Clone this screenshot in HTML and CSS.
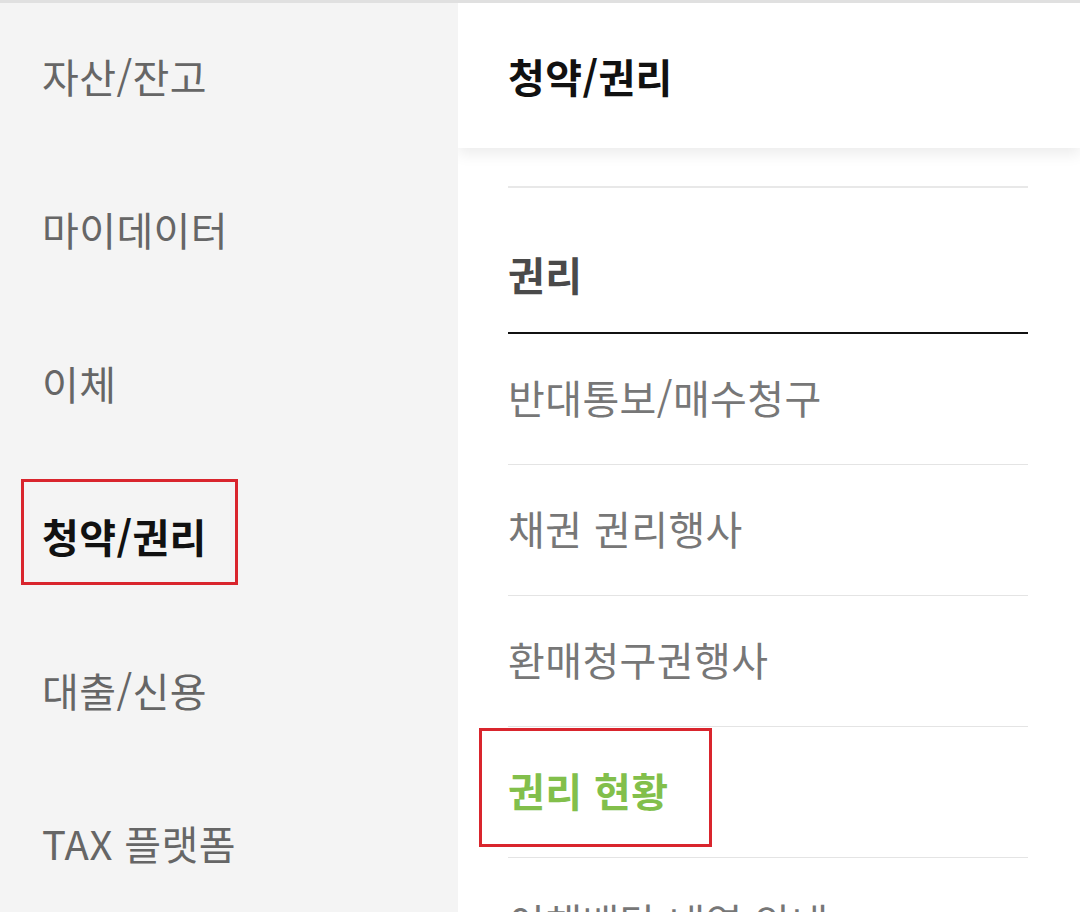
FILE: index.html
```html
<!DOCTYPE html>
<html lang="ko">
<head>
<meta charset="utf-8">
<title>청약/권리</title>
<link rel="stylesheet" href="styles.css">
</head>
<body>
<div class="topbar"></div>
<div class="layout">
  <nav class="side">
    <ul class="side-list">
      <li class="side-item">자산/잔고</li>
      <li class="side-item">마이데이터</li>
      <li class="side-item">이체</li>
      <li class="side-item active"><span class="mark mark-left">청약/권리</span></li>
      <li class="side-item">대출/신용</li>
      <li class="side-item">TAX 플랫폼</li>
    </ul>
  </nav>
  <main class="panel">
    <header class="panel-head">청약/권리</header>
    <div class="panel-body">
      <div class="section-head">권리</div>
      <ul class="menu">
        <li class="menu-item">반대통보/매수청구</li>
        <li class="menu-item">채권 권리행사</li>
        <li class="menu-item">환매청구권행사</li>
        <li class="menu-item current"><span class="mark mark-right">권리 현황</span></li>
        <li class="menu-item">이채배당 내역 안내</li>
      </ul>
    </div>
  </main>
</div>
</body>
</html>
```

FILE: styles.css
```css
* { box-sizing: border-box; }
html, body {
  margin: 0;
  padding: 0;
  width: 1080px;
  height: 912px;
  overflow: hidden;
  background: #ffffff;
  font-family: "Noto Sans CJK KR", "Noto Sans", sans-serif;
}
ul { list-style: none; margin: 0; padding: 0; }

.topbar {
  height: 3px;
  background: #e0e0e0;
}

.layout {
  display: flex;
  height: 909px;
}

.side {
  width: 458px;
  flex: 0 0 458px;
  background: #f4f4f4;
  overflow: hidden;
}
.side-list { margin-top: -4px; }
.side-item {
  height: 153.5px;
  display: flex;
  align-items: center;
  padding-left: 42px;
  font-size: 40px;
  line-height: 1.45;
  color: #666666;
  letter-spacing: 0.4px;
}
.side-item.active {
  color: #111111;
  font-weight: 700;
}

.mark {
  position: relative;
  display: inline-block;
}
.mark::after {
  content: "";
  position: absolute;
  border: 3px solid #d9252d;
}
.mark-left::after {
  top: -28px;
  bottom: -20px;
  left: -21px;
  right: -31px;
}
.mark-right::after {
  top: -33px;
  bottom: -28px;
  left: -29px;
  right: -44px;
}

.panel {
  flex: 1;
  background: #ffffff;
  overflow: hidden;
}
.panel-head {
  position: relative;
  z-index: 1;
  height: 145px;
  display: flex;
  align-items: center;
  padding: 1px 0 0 50px;
  background: #ffffff;
  font-size: 40px;
  font-weight: 700;
  color: #111111;
  letter-spacing: 0.4px;
  box-shadow: 0 6px 14px rgba(0, 0, 0, 0.08);
}
.panel-body {
  padding: 0 52px 0 50px;
}
.section-head {
  margin-top: 38px;
  border-top: 2px solid #e8e8e8;
  border-bottom: 2px solid #111111;
  padding: 60px 0 32px;
  font-size: 40px;
  line-height: 52px;
  font-weight: 700;
  color: #4a4a4a;
  letter-spacing: 0.4px;
}
.menu-item {
  height: 131px;
  display: flex;
  align-items: center;
  padding-bottom: 5px;
  border-bottom: 1px solid #e4e4e4;
  font-size: 40px;
  line-height: 1.45;
  color: #777777;
  letter-spacing: 0.4px;
}
.menu-item.current {
  color: #82bf4b;
  font-weight: 700;
}
```
